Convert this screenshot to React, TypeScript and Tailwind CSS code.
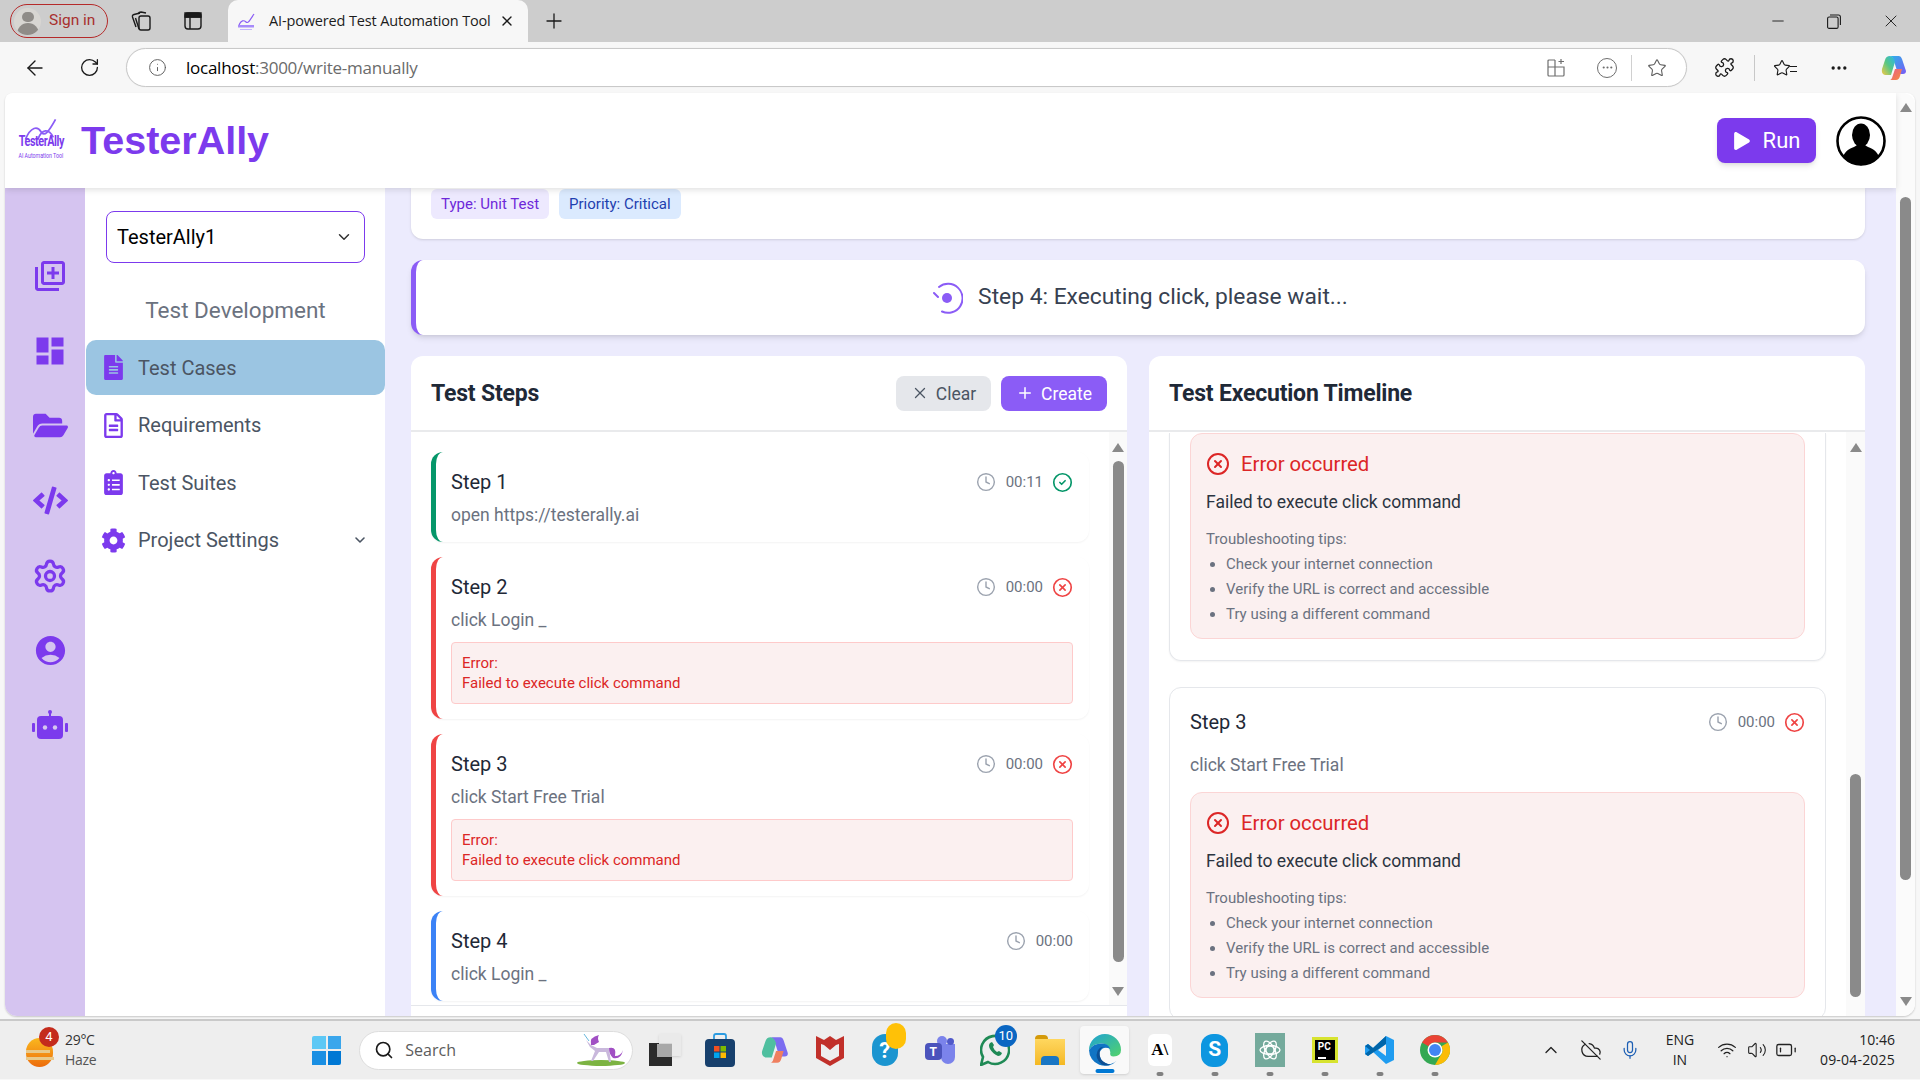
import React from "react";
import {
  FaFolderOpen,
  FaCode,
  FaFileAlt,
  FaRegFileAlt,
  FaClipboardList,
  FaCog,
  FaPlay,
} from "react-icons/fa";
import { MdOutlineLibraryAdd, MdDashboard, MdAccountCircle } from "react-icons/md";
import {
  ChevronDown,
  ChevronUp,
  Clock,
  CircleCheck,
  CircleX,
  X,
  Plus,
  Settings,
  ArrowLeft,
  RotateCw,
  Info,
  Star,
  Puzzle,
  MoreHorizontal,
  Minus,
  Search,
  Mic,
  Wifi,
  Volume2,
  CloudOff,
  BatteryLow,
} from "lucide-react";

const violet = "#7c3aed";

const RobotIcon = () => (
  <svg width="36" height="32" viewBox="0 0 36 32" fill={violet}>
    <rect x="5" y="6" width="26" height="23" rx="4" />
    <rect x="0" y="13" width="3" height="9" rx="1" />
    <rect x="33" y="13" width="3" height="9" rx="1" />
    <rect x="17" y="2" width="2" height="5" />
    <circle cx="18" cy="2" r="2" />
    <circle cx="13" cy="17.5" r="2.2" fill="#d5c4f0" />
    <circle cx="23" cy="17.5" r="2.2" fill="#d5c4f0" />
  </svg>
);

const railItems = [
  <MdOutlineLibraryAdd key="add" size={36} color={violet} />,
  <MdDashboard key="dash" size={36} color={violet} />,
  <FaFolderOpen key="folder" size={35} color={violet} />,
  <FaCode key="code" size={35} color={violet} />,
  <Settings key="gear" size={36} color={violet} strokeWidth={2.2} />,
  <MdAccountCircle key="user" size={35} color={violet} />,
  <RobotIcon key="bot" />,
];

const Logo = () => (
  <div className="flex flex-col items-center w-[46px] h-[46px] leading-none">
    <svg width="38" height="23" viewBox="0 0 34 20" fill="none" stroke="#8b5cf6" strokeWidth="1.6">
      <path d="M3 19 C8 7 14 7 17 12 C20 17 24 12 30 1" />
      <path d="M14 19 C18 9 24 9 28 17" />
    </svg>
    <span className="text-[15px] font-bold text-[#7c3aed] tracking-[-0.6px] scale-x-[0.72] -mt-[7px] whitespace-nowrap">TesterAlly</span>
    <span className="text-[7px] text-[#7c3aed] mt-[4px] scale-x-75 whitespace-nowrap">AI Automation Tool</span>
  </div>
);

const Avatar = () => (
  <svg width="50" height="50" viewBox="0 0 50 50">
    <circle cx="25" cy="25" r="23.5" fill="#fff" stroke="#000" strokeWidth="2.6" />
    <ellipse cx="25" cy="19" rx="9" ry="11.5" fill="#000" />
    <path d="M7 41 C10 32 18 32 21 29 L29 29 C32 32 40 32 43 41 A24 24 0 0 1 7 41 Z" fill="#000" />
  </svg>
);

const ScrollArrow = ({ down, color = "#8a8a8a" }: { down?: boolean; color?: string }) => (
  <div
    className={`w-0 h-0 border-x-[6px] border-x-transparent ${down ? "border-t-[9px]" : "border-b-[9px]"}`}
    style={down ? { borderTopColor: color } : { borderBottomColor: color }}
  />
);

const TabBar = () => (
  <div className="h-[42px] bg-[#cdcdcd] flex items-start pl-[10px] relative">
    <div className="mt-[4px] w-[98px] h-[34px] border-[1.5px] border-[#b52a2a] rounded-full flex items-center pl-[3px] gap-[8px]">
      <div className="w-[27px] h-[27px] rounded-full bg-[#d8d6d2] overflow-hidden flex flex-col items-center">
        <div className="w-[12px] h-[12px] rounded-full bg-[#8f8c88] mt-[4px]" />
        <div className="w-[22px] h-[14px] rounded-t-full bg-[#8f8c88] mt-[1px]" />
      </div>
      <span className="text-[15.5px] text-[#a8302f]">Sign in</span>
    </div>
    <div className="w-[120px] h-[42px] flex items-center pl-[22px] gap-[32px]">
      <svg width="22" height="22" viewBox="0 0 22 22" fill="none" stroke="#1a1a1a" strokeWidth="1.4">
        <rect x="9" y="6" width="11" height="14" rx="2" />
        <path d="M6 17 L2.5 7 Q2 5 4 4.5 L10 3" />
        <path d="M9 19 L5.5 8" />
        <path d="M8 4 Q9 2 11 2 L16 3" />
      </svg>
      <svg width="18" height="18" viewBox="0 0 18 18" fill="none" stroke="#1a1a1a" strokeWidth="1.4">
        <rect x="1" y="1" width="16" height="16" rx="3" />
        <path d="M1 5 H17 M6 5 V17" />
        <path d="M1 1 H17 V5 H1 Z" fill="#1a1a1a" />
      </svg>
    </div>
    <div className="w-[300px] h-[42px] bg-[#f7f7f7] rounded-t-[10px] flex items-center pl-[8px] pr-[13px]">
      <svg width="20" height="22" viewBox="0 0 20 22" fill="none" stroke="#8b5cf6" strokeWidth="1.2">
        <path d="M3 15 C5 10 8 10 10 12 C12 14 14 10 18 4" />
        <rect x="2" y="15" width="16" height="2.5" fill="#a78bfa" stroke="none" />
        <rect x="4" y="19" width="12" height="1" fill="#c4b5fd" stroke="none" />
      </svg>
      <span className="ml-[13px] text-[14.5px] text-[#1c1c1c] whitespace-nowrap flex-1 font-['Open_Sans',sans-serif] tracking-[-0.15px]">
        AI-powered Test Automation Tool
      </span>
      <X size={16} color="#1a1a1a" />
    </div>
    <div className="w-[52px] h-[42px] flex items-center justify-center">
      <Plus size={24} strokeWidth={1.3} color="#1a1a1a" />
    </div>
    <div className="ml-auto h-[42px] flex items-center pr-[19px] gap-[40px]">
      <Minus size={18} strokeWidth={1.2} color="#1a1a1a" />
      <svg width="14" height="15" viewBox="0 0 14 15" fill="none" stroke="#1a1a1a" strokeWidth="1.1">
        <rect x="0.6" y="3" width="10.5" height="11.4" rx="1.5" />
        <path d="M3 1 H11.5 Q13.4 1 13.4 3 V11" />
      </svg>
      <X size={20} strokeWidth={1.1} color="#1a1a1a" />
    </div>
  </div>
);

const AddressBar = () => (
  <div className="h-[51px] bg-[#f7f7f7] flex items-center">
    <div className="w-[71px] flex justify-end pr-[24px]">
      <ArrowLeft size={24} strokeWidth={1.4} color="#1a1a1a" />
    </div>
    <div className="w-[55px] flex justify-start pl-[8px]">
      <RotateCw size={21} strokeWidth={1.5} color="#1a1a1a" />
    </div>
    <div className="w-[1561px] h-[39px] bg-white border border-[#c9c9c9] rounded-full flex items-center pl-[21px] pr-[19px] shadow-[0_0_1px_#ddd]">
      <Info size={19} strokeWidth={1.2} color="#5c5c5c" />
      <span className="ml-[19px] text-[17px] font-['Open_Sans',sans-serif] tracking-[-0.25px] whitespace-nowrap">
        <span className="text-black">localhost</span>
        <span className="text-[#6b6b6b]">:3000/write-manually</span>
      </span>
      <div className="ml-auto flex items-center">
        <svg width="19" height="19" viewBox="0 0 19 19" fill="none" stroke="#6e6e6e" strokeWidth="1.2">
          <path d="M8 2 H2 Q1 2 1 3 V17 Q1 18 2 18 H16 Q17 18 17 17 V9 H1 M8 2 V18 M14 1 V6 M11.5 3.5 H17" />
        </svg>
        <div className="ml-[31px] w-[20px] h-[20px] rounded-full border-[1.2px] border-[#6e6e6e] flex items-center justify-center">
          <MoreHorizontal size={13} color="#6e6e6e" />
        </div>
        <div className="w-px h-[26px] bg-[#d0d0d0] ml-[14px]" />
        <Star size={20} strokeWidth={1.3} color="#5c5c5c" className="ml-[15px]" />
      </div>
    </div>
    <Puzzle size={21} strokeWidth={1.5} color="#1a1a1a" className="ml-[27px]" />
    <div className="w-px h-[26px] bg-[#c8c8c8] ml-[19px]" />
    <div className="ml-[18px] w-[24px] relative flex items-center">
      <Star size={18} strokeWidth={1.5} color="#1a1a1a" />
      <div className="absolute right-0 top-[7px] w-[7px] h-[6px] border-y border-[#1a1a1a]" />
    </div>
    <MoreHorizontal size={20} color="#1a1a1a" className="ml-[32px]" />
    <svg width="28" height="28" viewBox="0 0 28 28" className="ml-[31px]">
      <defs>
        <linearGradient id="cpa" x1="0" y1="0" x2="1" y2="1">
          <stop offset="0" stopColor="#2bb5e8" />
          <stop offset="1" stopColor="#7a5af5" />
        </linearGradient>
        <linearGradient id="cpb" x1="0" y1="1" x2="1" y2="0">
          <stop offset="0" stopColor="#f6c944" />
          <stop offset="0.5" stopColor="#57c785" />
          <stop offset="1" stopColor="#2bb5e8" />
        </linearGradient>
        <linearGradient id="cpc" x1="0" y1="0" x2="1" y2="1">
          <stop offset="0" stopColor="#e85d8a" />
          <stop offset="1" stopColor="#f78c3b" />
        </linearGradient>
      </defs>
      <path d="M10 2 H19 Q21 2 22 5 L26 17 Q26 20 23 20 H18 L14 7 Q13 3 10 2 Z" fill="url(#cpa)" />
      <path d="M10 2 Q6 2 5 6 L2 15 Q1 20 5 21 H11 L15 8 Q14 3 10 2 Z" fill="url(#cpb)" />
      <path d="M10 26 H16 Q19 26 20 22 L22 15 H15 L12 24 Q11 26 10 26 Z" fill="url(#cpc)" />
    </svg>
  </div>
);

const sideItems = [
  { label: "Test Cases", icon: <FaFileAlt size={25} color={violet} />, active: true },
  { label: "Requirements", icon: <FaRegFileAlt size={25} color={violet} /> },
  { label: "Test Suites", icon: <FaClipboardList size={25} color={violet} /> },
  { label: "Project Settings", icon: <FaCog size={25} color={violet} />, caret: true },
];

const Sidebar = () => (
  <div className="w-[300px] shrink-0 bg-white flex flex-col pl-px">
    <div className="mt-[23px] ml-[20px] w-[259px] h-[52px] border border-[#7c3aed] rounded-lg flex items-center pl-[10px] pr-[11px]">
      <span className="text-[20px] text-black flex-1">TesterAlly1</span>
      <ChevronDown size={18} color="#333" />
    </div>
    <div className="mt-[32px] h-[32px] flex items-center justify-center text-[22.5px] text-[#6b7280]">
      Test Development
    </div>
    <div className="mt-[13px] flex flex-col gap-[2.5px]">
      {sideItems.map((item) => (
        <div
          key={item.label}
          className={`h-[55px] flex items-center pl-[15px] pr-[17px] rounded-[10px] ${item.active ? "bg-[#9bc5e2]" : ""}`}
        >
          <div className="w-[38px] flex">{item.icon}</div>
          <span className="text-[20px] text-[#4b5563] flex-1 -ml-px">{item.label}</span>
          {item.caret && <ChevronDown size={16} color="#4b5563" strokeWidth={2.4} />}
        </div>
      ))}
    </div>
  </div>
);

const CardHeader = ({ title, children }: { title: string; children?: React.ReactNode }) => (
  <div className="h-[76px] shrink-0 border-b-2 border-[#e9eaec] flex items-center px-[20px]">
    <h2 className="text-[23px] font-bold text-[#1f2937] tracking-[-0.2px] flex-1 pt-[2px]">{title}</h2>
    {children}
  </div>
);

const StepMeta = ({ time, status }: { time: string; status?: "ok" | "fail" }) => (
  <div className="flex items-center text-[15px] text-[#6b7280]">
    <Clock size={20} strokeWidth={1.7} color="#9ca3af" />
    <span className="ml-[10px]">{time}</span>
    {status === "ok" && <CircleCheck size={21} strokeWidth={1.9} color="#059669" className="ml-[9px]" />}
    {status === "fail" && <CircleX size={21} strokeWidth={1.9} color="#ef4444" className="ml-[9px]" />}
  </div>
);

const steps = [
  { name: "Step 1", cmd: "open https://testerally.ai", time: "00:11", status: "ok" as const, bar: "border-l-[#059669]" },
  { name: "Step 2", cmd: "click Login _", time: "00:00", status: "fail" as const, bar: "border-l-[#ef4444]", err: true },
  { name: "Step 3", cmd: "click Start Free Trial", time: "00:00", status: "fail" as const, bar: "border-l-[#ef4444]", err: true },
  { name: "Step 4", cmd: "click Login _", time: "00:00", bar: "border-l-[#3b82f6]" },
];

const StepCard = ({ s }: { s: (typeof steps)[number] }) => (
  <div className={`rounded-xl border-l-[5px] ${s.bar} bg-white shadow-[0_1px_2px_rgba(0,0,0,0.05)] pl-[15px] pr-[16px] pt-[16px] pb-[15px]`}>
    <div className="flex items-center justify-between h-[28px]">
      <span className="text-[20px] text-[#1f2937]">{s.name}</span>
      <StepMeta time={s.time} status={s.status} />
    </div>
    <div className="mt-[7px] h-[24px] text-[17.5px] leading-[24px] text-[#6b7280]">{s.cmd}</div>
    {s.err && (
      <div className="mt-[10px] h-[62px] rounded border border-[#fecaca] bg-[#fbf0f0] px-[10px] py-[10px] text-[15px] leading-[20px] text-[#dc2626]">
        <div>Error:</div>
        <div>Failed to execute click command</div>
      </div>
    )}
  </div>
);

const ErrorBox = () => (
  <div className="h-[206px] shrink-0 rounded-xl border border-[#fbd5d5] bg-[#fbf0f0] px-[15px] pt-[17px]">
    <div className="flex items-center h-[26px] gap-[11px]">
      <CircleX size={24} strokeWidth={2} color="#dc2626" />
      <span className="text-[20.3px] text-[#dc2626]">Error occurred</span>
    </div>
    <div className="mt-[12px] text-[17.5px] leading-[26px] text-[#2b3440]">Failed to execute click command</div>
    <div className="mt-[12px] text-[15px] leading-[25px] text-[#6b7280]">
      <div>Troubleshooting tips:</div>
      <ul className="list-disc pl-[20px]">
        <li>Check your internet connection</li>
        <li>Verify the URL is correct and accessible</li>
        <li>Try using a different command</li>
      </ul>
    </div>
  </div>
);

const MainPanel = () => (
  <div className="flex-1 min-w-0 bg-[#ecebfd] flex flex-col pl-[26px] pr-[31px] overflow-hidden">
    <div className="h-[51px] shrink-0 bg-white rounded-b-xl flex items-start gap-[10px] pl-[20px] pt-px shadow-sm">
      <span className="h-[30px] px-[10px] rounded-md bg-[#ede9fe] text-[#6d28d9] text-[15px] flex items-center">Type: Unit Test</span>
      <span className="h-[30px] px-[10px] rounded-md bg-[#dbeafe] text-[#1e40af] text-[15px] flex items-center">Priority: Critical</span>
    </div>
    <div className="mt-[21px] h-[75px] shrink-0 rounded-xl bg-white border-l-[5px] border-l-[#8b5cf6] shadow-md flex items-center justify-center gap-[15px]">
      <svg width="32" height="32" viewBox="0 0 32 32" fill="none" className="-ml-[2px]">
        <path d="M3 11 L7 15 M8 5 A14.5 14.5 0 1 1 11 29.5" stroke="#8b5cf6" strokeWidth="2" strokeLinecap="round" />
        <circle cx="16" cy="16" r="5" fill="#8b5cf6" />
      </svg>
      <span className="text-[22.8px] text-[#374151] -mt-px">Step 4: Executing click, please wait...</span>
    </div>
    <div className="mt-[21px] flex-1 min-h-0 flex gap-[22px]">
      <div className="w-[716px] shrink-0 bg-white rounded-t-xl flex flex-col overflow-hidden">
        <CardHeader title="Test Steps">
          <button className="h-[35px] w-[95px] rounded-lg bg-[#e5e7eb] text-[#4b5563] text-[17.5px] flex items-center justify-center gap-[7px]">
            <X size={18} strokeWidth={1.7} />
            <span className="pt-[2px]">Clear</span>
          </button>
          <button className="ml-[10px] h-[35px] w-[106px] rounded-lg bg-[#8b5cf6] text-white text-[17.5px] flex items-center justify-center gap-[7px]">
            <Plus size={18} strokeWidth={2} />
            <span className="pt-[2px]">Create</span>
          </button>
        </CardHeader>
        <div className="h-[574px] shrink-0 flex border-b border-[#e5e7eb]">
          <div className="flex-1 min-w-0 pl-[20px] pr-[20px] pt-[20px] flex flex-col gap-[15px] overflow-hidden">
            {steps.map((s) => (
              <StepCard key={s.name} s={s} />
            ))}
          </div>
          <div className="w-[18px] shrink-0 bg-[#fafafa] flex flex-col items-center pt-[11px]">
            <ScrollArrow />
            <div className="w-[11px] h-[501px] mt-[9px] rounded-full bg-[#8a8a8a]" />
            <div className="mt-[25px]"><ScrollArrow down /></div>
          </div>
        </div>
      </div>
      <div className="flex-1 min-w-0 bg-white rounded-t-xl flex flex-col overflow-hidden">
        <CardHeader title="Test Execution Timeline" />
        <div className="flex-1 min-h-0 flex">
          <div className="flex-1 min-w-0 pl-[20px] pr-[20px] pt-px flex flex-col gap-[26px] overflow-hidden">
            <div className="shrink-0 border-x border-b border-[#e5e7eb] rounded-b-xl px-[20px] pb-[21px] shadow-[0_1px_2px_rgba(0,0,0,0.05)]">
              <ErrorBox />
            </div>
            <div className="shrink-0 border border-[#e5e7eb] rounded-xl px-[20px] pt-[20px] pb-[21px]">
              <div className="flex items-center justify-between h-[28px]">
                <span className="text-[20px] text-[#1f2937]">Step 3</span>
                <StepMeta time="00:00" status="fail" />
              </div>
              <div className="mt-[17px] h-[24px] text-[17.5px] leading-[24px] text-[#6b7280]">click Start Free Trial</div>
              <div className="mt-[15px]"><ErrorBox /></div>
            </div>
          </div>
          <div className="w-[19px] shrink-0 bg-[#fafafa] flex flex-col items-center pt-[11px]">
            <ScrollArrow />
            <div className="w-[11px] h-[223px] mt-[322px] rounded-full bg-[#8a8a8a]" />
          </div>
        </div>
      </div>
    </div>
  </div>
);

const PageScrollbar = () => (
  <div className="w-[19px] shrink-0 bg-[#fbfbfb] flex flex-col items-center pt-[10px] rounded-r-xl">
    <ScrollArrow />
    <div className="w-[11px] h-[683px] mt-[85px] rounded-full bg-[#8a8a8a]" />
    <div className="mt-[117px]"><ScrollArrow down /></div>
  </div>
);

const Dot = ({ blue }: { blue?: boolean }) => (
  <div className={`absolute left-1/2 -translate-x-1/2 bottom-[-10px] h-[4px] rounded-full ${blue ? "w-[19px] bg-[#0078d4]" : "w-[7px] bg-[#808080]"}`} />
);

const TaskIcon = ({ children, dot, blue }: { children: React.ReactNode; dot?: boolean; blue?: boolean }) => (
  <div className="w-[55px] h-[32px] flex items-center justify-center relative shrink-0">
    {children}
    {dot && <Dot blue={blue} />}
  </div>
);

const Taskbar = () => (
  <div className="h-[60px] shrink-0 bg-[#eeeeee] border-t-2 border-[#c9c9c9] flex items-center">
    <div className="relative w-[29px] h-[29px] ml-[26px] mt-[4px]">
      <div className="w-[27px] h-[29px] rounded-full bg-gradient-to-b from-[#f9b81f] to-[#ec6b0b]" />
      <div className="absolute left-0 top-[12px] w-[24px] h-[3px] bg-[#e8c98a]" />
      <div className="absolute left-0 top-[19px] w-[28px] h-[3px] bg-[#e8c98a]" />
      <div className="absolute -top-[11px] left-[13px] w-[20px] h-[20px] rounded-full bg-[#c42b1c] text-white text-[13px] flex items-center justify-center">4</div>
    </div>
    <div className="ml-[10px] text-[14px] leading-[20px] text-[#333] font-['Open_Sans',sans-serif] tracking-[-0.3px]">
      <div>29°C</div>
      <div className="text-[#555]">Haze</div>
    </div>
    <div className="ml-[216px] grid grid-cols-2 gap-[1.5px] w-[29px] h-[29px]">
      <div className="bg-[#5dc8f5] rounded-tl-[2px]" />
      <div className="bg-[#3aa6ec]" />
      <div className="bg-[#1a8fe3]" />
      <div className="bg-[#0078d4] rounded-br-[2px]" />
    </div>
    <div className="ml-[18px] w-[274px] h-[39px] rounded-full bg-white border border-[#dddddd] flex items-center pl-[14px] pr-[7px] overflow-hidden">
      <Search size={20} strokeWidth={2} color="#1a1a1a" />
      <span className="ml-[11px] text-[16px] text-[#5c5c5c] font-['Open_Sans',sans-serif] flex-1">Search</span>
      <svg width="52" height="36" viewBox="0 0 52 36">
        <ellipse cx="28" cy="31" rx="24" ry="3" fill="#7cb342" />
        <path d="M13 8 L18 13 L24 16 H36 L38 30 H36 L33 20 H26 L20 29 H18 L22 19 L17 15 Z" fill="#c9b8dc" />
        <path d="M18 13 Q16 5 26 3 Q24 6 26 10 L21 13 Z M36 16 Q44 14 42 24 Q48 24 50 18 Q48 28 40 26 Q36 22 36 16 Z" fill="#a14fc4" />
        <path d="M11 2 L16 9" stroke="#67b7dc" strokeWidth="1" />
      </svg>
    </div>
    <div className="ml-[16px] w-[32px] h-[32px] relative shrink-0">
      <div className="absolute left-0 bottom-0 w-[23px] h-[23px] bg-[#2b2b2b]" />
      <div className="absolute right-0 top-0 w-[22px] h-[22px] bg-[#e9e9e9]/90 shadow-sm" />
      <div className="absolute left-[8px] top-[10px] w-[15px] h-[13px] bg-[#a8a8a8]" />
    </div>
    <div className="ml-[11px] flex items-center">
      <TaskIcon>
        <svg width="30" height="34" viewBox="0 0 30 34">
          <path d="M9 6 V3 Q9 1 11 1 H19 Q21 1 21 3 V6" fill="none" stroke="#2c9be0" strokeWidth="1.8" />
          <rect x="0" y="6" width="30" height="28" rx="4" fill="#17406d" />
          <rect x="9" y="13" width="5.5" height="5.5" fill="#f25022" />
          <rect x="15.5" y="13" width="5.5" height="5.5" fill="#7fba00" />
          <rect x="9" y="19.5" width="5.5" height="5.5" fill="#00a4ef" />
          <rect x="15.5" y="19.5" width="5.5" height="5.5" fill="#ffb900" />
        </svg>
      </TaskIcon>
      <TaskIcon>
        <svg width="30" height="30" viewBox="0 0 28 28">
          <path d="M10 2 H19 Q21 2 22 5 L26 17 Q26 20 23 20 H18 L14 7 Q13 3 10 2 Z" fill="#7c6cf0" />
          <path d="M10 2 Q6 2 5 6 L2 15 Q1 20 5 21 H11 L15 8 Q14 3 10 2 Z" fill="#4fbf9f" />
          <path d="M10 26 H16 Q19 26 20 22 L22 15 H15 L12 24 Q11 26 10 26 Z" fill="#ef7f5f" />
        </svg>
      </TaskIcon>
      <TaskIcon>
        <svg width="28" height="32" viewBox="0 0 28 32">
          <path d="M0 2 L8 6 L14 2 L20 6 L28 2 V24 L14 32 L0 24 Z M5 10 V22 L14 27 L23 22 V10 L20 11 L14 16 L8 11 Z" fill="#c1302a" fillRule="evenodd" />
        </svg>
      </TaskIcon>
      <TaskIcon>
        <div className="relative">
          <div className="w-[26px] h-[32px] rounded-full bg-[#1b95d0] text-white text-[22px] font-bold flex items-center justify-center">?</div>
          <div className="absolute -top-[11px] left-[14px] w-[20px] h-[26px] rounded-full bg-[#ffc107]" />
        </div>
      </TaskIcon>
      <TaskIcon>
        <div className="relative w-[30px] h-[28px]">
          <div className="absolute right-0 top-[8px] w-[14px] h-[20px] rounded-b-lg bg-[#7b83eb]" />
          <div className="absolute left-[12px] top-0 w-[10px] h-[10px] rounded-full bg-[#7b83eb]" />
          <div className="absolute right-[1px] top-[2px] w-[7px] h-[7px] rounded-full bg-[#5059c9]" />
          <div className="absolute left-0 top-[7px] w-[17px] h-[17px] rounded-sm bg-[#4b53bc] text-white text-[12px] font-bold flex items-center justify-center">T</div>
        </div>
      </TaskIcon>
      <TaskIcon>
        <div className="relative">
          <svg width="30" height="32" viewBox="0 0 30 32" fill="none">
            <path d="M1 31 L3 23 A14 14 0 1 1 8 28 Z" stroke="#1f8a55" strokeWidth="2.6" />
            <path d="M10 9 Q8 11 10 15 Q13 20 18 22 Q21 22 22 19 L19 17 L17 18 Q14 16 13 13 L14 11 L12 8 Z" fill="#1f8a55" />
          </svg>
          <div className="absolute -top-[9px] left-[15px] w-[22px] h-[22px] rounded-full bg-[#0a66c2] text-white text-[13px] flex items-center justify-center">10</div>
        </div>
      </TaskIcon>
      <TaskIcon>
        <div className="w-[30px] h-[30px] relative">
          <div className="absolute top-0 left-0 w-[13px] h-[6px] rounded-t-sm bg-[#d49a0a]" />
          <div className="absolute top-[4px] left-0 w-[30px] h-[26px] bg-gradient-to-b from-[#ffd75e] to-[#f4b81f]" />
          <div className="absolute bottom-0 left-[6px] w-[18px] h-[9px] rounded-t-sm bg-[#1976c4]" />
        </div>
      </TaskIcon>
      <div className="w-[49px] h-[48px] rounded bg-[#f9f9f9] shadow-sm flex items-center justify-center relative mx-[3px] shrink-0">
        <svg width="32" height="32" viewBox="0 0 30 30">
          <defs>
            <linearGradient id="edg" x1="0" y1="0" x2="1" y2="1">
              <stop offset="0" stopColor="#1fa2d6" />
              <stop offset="1" stopColor="#52d36a" />
            </linearGradient>
          </defs>
          <path d="M0 15 A15 15 0 0 1 30 15 Q30 21 23 21 Q19 21 20 17 Q19 9 12 9 Q4 9 0 15 Z" fill="url(#edg)" />
          <path d="M0 15 Q4 9 12 9 Q18 9 20 14 Q13 11 10 17 Q9 25 17 28 Q21 29 26 25 A15 15 0 0 1 0 15 Z" fill="#1074c4" />
          <path d="M12 28.5 Q5 23 8 16 Q10 12 14 12 Q9 14 10 20 Q11 27 20 29 Q16 30 12 28.5 Z" fill="#0c4f94" />
        </svg>
        <div className="absolute left-1/2 -translate-x-1/2 bottom-[1px] w-[19px] h-[4px] rounded-full bg-[#0078d4]" />
      </div>
      <TaskIcon dot>
        <div className="w-[24px] h-[32px] rounded-md bg-white flex items-center justify-center text-[17px] font-bold text-black font-['Liberation_Serif',serif]">A\</div>
      </TaskIcon>
      <TaskIcon dot>
        <div className="w-[27px] h-[33px] rounded-[12px] bg-[#0d96e0] text-white text-[21px] font-bold flex items-center justify-center">S</div>
      </TaskIcon>
      <TaskIcon dot>
        <div className="w-[30px] h-[34px] bg-[#74aa9c] flex items-center justify-center">
          <svg width="24" height="24" viewBox="0 0 24 24" fill="none" stroke="#fff" strokeWidth="1.3">
            <circle cx="12" cy="12" r="4" />
            <ellipse cx="12" cy="12" rx="10" ry="4.5" />
            <ellipse cx="12" cy="12" rx="10" ry="4.5" transform="rotate(60 12 12)" />
            <ellipse cx="12" cy="12" rx="10" ry="4.5" transform="rotate(120 12 12)" />
          </svg>
        </div>
      </TaskIcon>
      <TaskIcon dot>
        <div className="w-[26px] h-[26px] border-[3px] border-[#d7e32f] bg-black text-white text-[10px] font-bold leading-none pl-[3px] pt-[2px]">
          PC
          <div className="w-[8px] h-[2px] bg-white mt-[5px]" />
        </div>
      </TaskIcon>
      <TaskIcon dot>
        <svg width="30" height="30" viewBox="0 0 30 30">
          <path d="M21 1 L29 5 V25 L21 29 L8 17 L3 21 L0 19 V11 L3 9 L8 13 Z M21 9 L13 15 L21 21 Z" fill="#1f9cf0" fillRule="evenodd" />
          <path d="M21 1 L8 13 L3 9 L0 11 L5 15 L0 19 L3 21 L21 9 Z" fill="#0065a9" />
        </svg>
      </TaskIcon>
      <TaskIcon dot>
        <svg width="30" height="30" viewBox="0 0 30 30">
          <circle cx="15" cy="15" r="15" fill="#34a853" />
          <path d="M15 0 A15 15 0 0 1 28 7.5 H15 A7.5 7.5 0 0 0 8.5 11.2 L2 7.5 A15 15 0 0 1 15 0 Z" fill="#ea4335" />
          <path d="M28 7.5 A15 15 0 0 1 15 30 L21.5 18.8 A7.5 7.5 0 0 0 21.5 11.2 Z" fill="#fbbc05" />
          <circle cx="15" cy="15" r="7.5" fill="#fff" />
          <circle cx="15" cy="15" r="6" fill="#4285f4" />
        </svg>
      </TaskIcon>
    </div>
    <div className="ml-auto flex items-center pr-[25px] text-[#222]">
      <ChevronUp size={20} strokeWidth={1.6} />
      <CloudOff size={22} strokeWidth={1.4} className="ml-[19px]" />
      <Mic size={20} strokeWidth={1.5} color="#1d5fb4" className="ml-[18px]" />
      <div className="ml-[17px] w-[46px] text-center text-[14px] leading-[20px] font-['Open_Sans',sans-serif]">
        <div>ENG</div>
        <div>IN</div>
      </div>
      <Wifi size={20} strokeWidth={1.5} className="ml-[14px]" />
      <Volume2 size={20} strokeWidth={1.3} className="ml-[10px]" />
      <BatteryLow size={22} strokeWidth={1.4} className="ml-[8px]" />
      <div className="ml-[23px] text-right text-[14px] leading-[20px] font-['Open_Sans',sans-serif]">
        <div>10:46</div>
        <div className="tracking-[0.2px]">09-04-2025</div>
      </div>
    </div>
  </div>
);

export default function App() {
  return (
    <div className="w-[1920px] h-[1080px] overflow-hidden flex flex-col bg-[#f7f7f7] font-['Roboto',sans-serif]">
      <TabBar />
      <AddressBar />
      <div className="h-[924px] shrink-0 pl-[5px] pr-[5px] pb-[1px] flex flex-col">
        <div className="flex-1 min-h-0 flex flex-col rounded-t-lg rounded-b-xl overflow-hidden bg-white shadow-[0_1px_2px_rgba(0,0,0,0.2)]">
          <div className="flex-1 min-h-0 flex">
            <div className="flex-1 min-w-0 flex flex-col">
              <header className="h-[95px] shrink-0 bg-white flex items-center pl-[13px] pr-[10px] shadow-[0_2px_6px_rgba(0,0,0,0.12)] relative z-10">
                <Logo />
                <h1 className="ml-[17px] text-[39.5px] font-bold text-[#7c3aed] font-['Liberation_Sans',sans-serif]">TesterAlly</h1>
                <button className="ml-auto w-[99px] h-[45px] rounded-lg bg-[#7c3aed] text-white text-[22px] flex items-center justify-center gap-[12px] shadow-md">
                  <FaPlay size={18} />
                  Run
                </button>
                <div className="ml-[20px]"><Avatar /></div>
              </header>
              <div className="flex-1 min-h-0 flex">
                <div className="w-[80px] shrink-0 bg-[#d5c4f0] flex flex-col items-center pl-[10px] pt-[50px]">
                  {railItems.map((icon) => (
                    <div key={icon.key} className="h-[75px] shrink-0 flex items-center justify-center">{icon}</div>
                  ))}
                </div>
                <Sidebar />
                <MainPanel />
              </div>
            </div>
            <PageScrollbar />
          </div>
        </div>
      </div>
      <div className="h-[2px] shrink-0" />
      <Taskbar />
    </div>
  );
}
